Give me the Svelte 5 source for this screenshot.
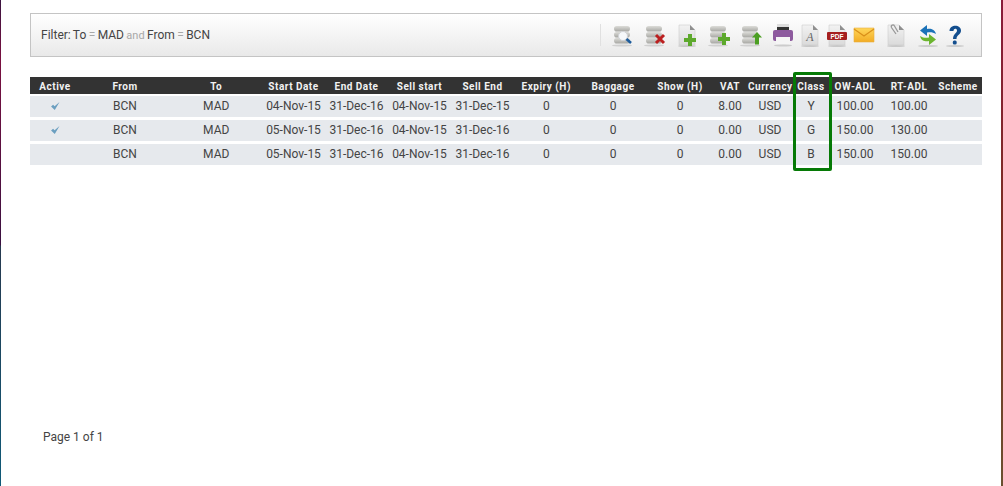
<script>
	const columns = [
		['Active', 50], ['From', 90], ['To', 92.5], ['Start Date', 62], ['End Date', 64], ['Sell start', 62],
		['Sell End', 64], ['Expiry (H)', 63.5], ['Baggage', 70], ['Show (H)', 64], ['VAT', 36], ['Currency', 44],
		['Class', 38], ['OW-ADL', 50], ['RT-ADL', 58], ['Scheme', 44]
	];

	const rows = [
		[true, 'BCN', 'MAD', '04-Nov-15', '31-Dec-16', '04-Nov-15', '31-Dec-15', '0', '0', '0', '8.00', 'USD', 'Y', '100.00', '100.00', ''],
		[true, 'BCN', 'MAD', '05-Nov-15', '31-Dec-16', '04-Nov-15', '31-Dec-16', '0', '0', '0', '0.00', 'USD', 'G', '150.00', '130.00', ''],
		[false, 'BCN', 'MAD', '05-Nov-15', '31-Dec-16', '04-Nov-15', '31-Dec-16', '0', '0', '0', '0.00', 'USD', 'B', '150.00', '150.00', '']
	];

	const stack = [3, 9, 15];
</script>

{#snippet disks()}
	{#each stack as y}
		<rect x="3" {y} width="16" height="5.600" rx="2.800" fill="url(#disk)" />
	{/each}
	<ellipse cx="11" cy="22.500" rx="10" ry="1" fill="#d0d0d0" />
{/snippet}

{#snippet page()}
	<ellipse cx="12" cy="23" rx="9" ry="1" fill="#c8c8c8" />
	<path d="M4 2h11l5 5v15H4z" fill="url(#sheet)" stroke="#cfcfcf" stroke-width="0.600" />
	<path d="M15 2l5 5h-5z" fill="#8f8f8f" />
{/snippet}

{#snippet plus(x, y)}
	<path d="M{x - 2} {y - 6}h4v4h4v4h-4v4h-4v-4h-4v-4h4z" fill="#5da92c" />
{/snippet}

<div class="frame">
	<svg class="defs" width="0" height="0" aria-hidden="true">
		<defs>
			<linearGradient id="disk" x1="0" y1="0" x2="0" y2="1">
				<stop offset="0" stop-color="#dcdcd8" />
				<stop offset="1" stop-color="#a6a6a2" />
			</linearGradient>
			<linearGradient id="sheet" x1="0" y1="0" x2="0" y2="1">
				<stop offset="0" stop-color="#f2f2f2" />
				<stop offset="1" stop-color="#dadada" />
			</linearGradient>
			<linearGradient id="mail" x1="0" y1="0" x2="0" y2="1">
				<stop offset="0" stop-color="#ffd659" />
				<stop offset="1" stop-color="#f2ac25" />
			</linearGradient>
		</defs>
	</svg>

	<div class="filter-bar">
		<div class="filter">
			Filter: To <span class="op">=</span> MAD <span class="and">and</span> From <span class="op">=</span> BCN
		</div>
		<div class="tools">
			<span class="sep"></span>
			<svg class="tool" viewBox="0 0 24 24">
				{@render disks()}
				<circle cx="12" cy="13" r="4.500" fill="#f6f8fa" stroke="#d0d2d6" />
				<path d="M15.500 16l4.500 4" stroke="#1d5c9c" stroke-width="2.600" />
			</svg>
			<svg class="tool" viewBox="0 0 24 24">
				{@render disks()}
				<path d="M13 12l8 8M21 12l-8 8" stroke="#bb2020" stroke-width="3" />
			</svg>
			<svg class="tool" viewBox="0 0 24 24">
				{@render page()}
				{@render plus(15, 17)}
			</svg>
			<svg class="tool" viewBox="0 0 24 24">
				{@render disks()}
				{@render plus(17, 16)}
			</svg>
			<svg class="tool" viewBox="0 0 24 24">
				{@render disks()}
				<path d="M18 9l5 5.500h-3v7h-4v-7h-3z" fill="#4c9f23" />
			</svg>
			<svg class="tool" viewBox="0 0 24 24">
				<path d="M6 1h12v7H6z" fill="#ddd" />
				<path d="M6 4h12v4H6z" fill="#333" />
				<rect x="2" y="7" width="20" height="11" rx="2" fill="#8d5a9e" />
				<path d="M5 14h14v7H5z" fill="#f5f5f5" />
				<ellipse cx="12" cy="22.500" rx="9" ry="1" fill="#ccc" />
			</svg>
			<svg class="tool tight" viewBox="0 0 24 24">
				{@render page()}
				<text x="12" y="18" class="glyph">A</text>
			</svg>
			<svg class="tool tight" viewBox="0 0 24 24">
				{@render page()}
				<rect x="2" y="9" width="20" height="8" rx="1" fill="#a51f1f" />
				<text x="12" y="15.500" class="pdf">PDF</text>
			</svg>
			<svg class="tool tight" viewBox="0 0 24 24">
				<path d="M2 5h20v14H2z" fill="url(#mail)" stroke="#e8b040" stroke-width="0.600" />
				<path d="M2 6l10 7 10-7" fill="none" stroke="#d98f1a" stroke-width="1.200" />
			</svg>
			<svg class="tool" viewBox="0 0 24 24">
				{@render page()}
				<path d="M12 11L7.500 4.500C6.500 2 9.500 1 10.500 3L14 9" fill="none" stroke="#999" stroke-width="1.300" />
			</svg>
			<svg class="tool" viewBox="0 0 24 24">
				<ellipse cx="12" cy="23" rx="10" ry="1" fill="#ccc" />
				<path d="M20 11C19 6 14 5 11 6V2L4 7.500 11 13V9.500C14 9 17 9 20 11z" fill="#1b72b8" />
				<path d="M4 13C5 18 10 19 13 18v4l7-5.500L13 11v3.500C10 15 7 15 4 13z" fill="#6cb52f" />
			</svg>
			<svg class="tool tight" viewBox="0 0 24 24">
				<ellipse cx="12" cy="23" rx="9" ry="1" fill="#ccc" />
				<path d="M6.500 8C6.500 1 18 1 18 7.500 18 12 13.500 11.500 13.500 16H10C10 10.500 14 10.500 14 7.500 14 5 10.500 5 10.500 8z" fill="#134e8e" />
				<rect x="9.800" y="17.500" width="3.900" height="4" rx="1.500" fill="#134e8e" />
			</svg>
		</div>
	</div>

	<div class="grid-wrap">
		<table>
			<colgroup>
				{#each columns as [, width]}
					<col style:width="{width}px" />
				{/each}
			</colgroup>
			<thead>
				<tr>
					{#each columns as [name]}
						<th>{name}</th>
					{/each}
				</tr>
			</thead>
			<tbody>
				{#each rows as [active, ...cells]}
					<tr>
						<td>
							{#if active}
								<svg class="check" viewBox="0 0 10 9"><path d="M0 5.200L2.300 3 4 4.800 9.500 0 4.200 9z" fill="#6b9fc0" /></svg>
							{/if}
						</td>
						{#each cells as cell}
							<td>{cell}</td>
						{/each}
					</tr>
				{/each}
			</tbody>
		</table>
		<div class="highlight"></div>
	</div>

	<div class="pager">Page 1 of 1</div>
</div>

<style>
	:global(body) {
		background: #fff;
	}

	.frame {
		box-sizing: border-box;
		height: 486px;
		padding: 13px 21px 0 30px;
		background:
			linear-gradient(to bottom, #3a1440 0, #7a1040 60px, #3a1040 245px, #26394f 246px, #0f5a78 100%) left / 1px 100% no-repeat,
			linear-gradient(to bottom, #8a1a3a 0, #7a3020 50%, #6b5030 100%) right / 2px 100% no-repeat;
		font-family: Roboto, sans-serif;
		font-size: 12px;
		color: #444;
	}

	.defs {
		position: absolute;
	}

	.filter-bar {
		box-sizing: border-box;
		display: flex;
		align-items: center;
		justify-content: space-between;
		height: 44px;
		padding: 0 14px 0 10px;
		border: 1px solid #c4c4c4;
		background: linear-gradient(to bottom, #fff, #e9e9e9);
	}

	.filter {
		word-spacing: -0.6px;
	}

	.op,
	.and {
		color: #a8a8a8;
	}

	.and {
		font-size: 11px;
	}

	.tools {
		display: flex;
		align-items: center;
	}

	.sep {
		width: 1px;
		height: 22px;
		margin-right: 2px;
		background: #e0e0e0;
	}

	.tool {
		width: 24px;
		height: 24px;
		margin-left: 8px;
	}

	.tool.tight {
		margin-left: 3px;
	}

	.glyph {
		font-family: "Liberation Serif", serif;
		font-style: italic;
		font-size: 12px;
		fill: #666;
		text-anchor: middle;
	}

	.pdf {
		font-family: "Liberation Sans", sans-serif;
		font-weight: 700;
		font-size: 6.500px;
		fill: #fff;
		text-anchor: middle;
	}

	.grid-wrap {
		position: relative;
		margin-top: 20px;
		width: 952px;
	}

	table {
		table-layout: fixed;
		width: 952px;
		border-collapse: separate;
		border-spacing: 0;
	}

	th {
		height: 15px;
		padding: 2px 0 0;
		background: #333;
		color: #f2f2f2;
		font-size: 10px;
		font-weight: 700;
		letter-spacing: 0.5px;
		text-align: center;
		white-space: nowrap;
	}

	th:last-child {
		padding-right: 4px;
	}

	td {
		height: 19px;
		padding: 0 0 2px;
		background: #e6e9ed;
		text-align: center;
		white-space: nowrap;
		border-top: 3px solid #fff;
	}

	tbody tr:first-child td {
		border-top-width: 2px;
	}

	.check {
		display: inline-block;
		width: 9px;
		height: 8px;
		vertical-align: middle;
	}

	.highlight {
		position: absolute;
		left: 763px;
		top: -5px;
		width: 33px;
		height: 93px;
		border: 3px solid #067a06;
		border-radius: 2px;
	}

	.pager {
		margin-top: 265px;
		padding-left: 13px;
		line-height: 14px;
	}
</style>
